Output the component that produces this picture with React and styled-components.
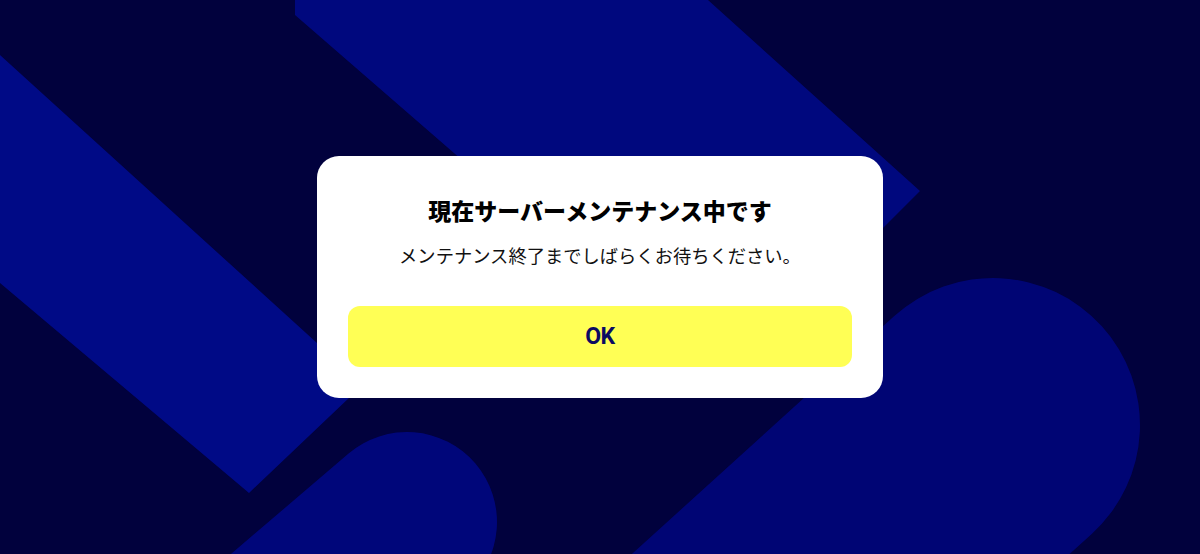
import React from "react";
import styled, { createGlobalStyle } from "styled-components";

const GlobalStyle = createGlobalStyle`
  html, body { margin: 0; padding: 0; }
  body {
    background: #01013d;
    font-family: "Noto Sans CJK JP", "Noto Sans", sans-serif;
  }
  * { box-sizing: border-box; }
`;

const Screen = styled.main`
  position: relative;
  width: 100vw;
  height: 100vh;
  min-height: 554px;
  overflow: hidden;
  background: #01013d;
  display: flex;
  align-items: center;
  justify-content: center;
`;

const Backdrop = styled.svg`
  position: absolute;
  inset: 0;
  width: 100%;
  height: 100%;
  display: block;
`;

const Dialog = styled.section`
  position: relative;
  z-index: 1;
  width: 566px;
  background: #ffffff;
  border-radius: 22px;
  padding: 38px 31px 31px;
  display: flex;
  flex-direction: column;
  align-items: center;
`;

const Title = styled.h1`
  margin: 0;
  font-size: 23px;
  line-height: 32px;
  font-weight: 900;
  color: #000000;
  text-align: center;
`;

const Message = styled.p`
  margin: 16px 0 0;
  font-size: 18.3px;
  line-height: 27px;
  font-weight: 400;
  color: #111111;
  text-align: center;
`;

const OkButton = styled.button`
  margin-top: 37px;
  width: 100%;
  height: 61px;
  border: none;
  border-radius: 12px;
  background: #ffff55;
  color: #0b0b62;
  font-family: Roboto, "Liberation Sans", sans-serif;
  font-size: 23px;
  font-weight: 700;
  letter-spacing: -0.5px;
  cursor: pointer;
`;

function Background() {
  return (
    <Backdrop viewBox="0 0 1200 554" preserveAspectRatio="xMidYMid slice" aria-hidden="true">
      <polygon
        fill="#00087e"
        points="295,0 708,0 920,191 820,291 500,300 500,193 295,15"
      />
      <polygon
        fill="#000a86"
        points="0,55 350,373 370,378 249,493 0,283"
      />
      <g transform="translate(407 522) rotate(139.5)">
        <rect x="-90" y="-90" width="420" height="180" rx="90" fill="#00067a" />
      </g>
      <g transform="translate(993 425) rotate(137.8)">
        <rect x="-147" y="-147" width="700" height="294" rx="147" fill="#000574" />
      </g>
    </Backdrop>
  );
}

export default function App() {
  return (
    <>
      <GlobalStyle />
      <Screen>
        <Background />
        <Dialog role="dialog">
          <Title>現在サーバーメンテナンス中です</Title>
          <Message>メンテナンス終了までしばらくお待ちください。</Message>
          <OkButton type="button">OK</OkButton>
        </Dialog>
      </Screen>
    </>
  );
}
